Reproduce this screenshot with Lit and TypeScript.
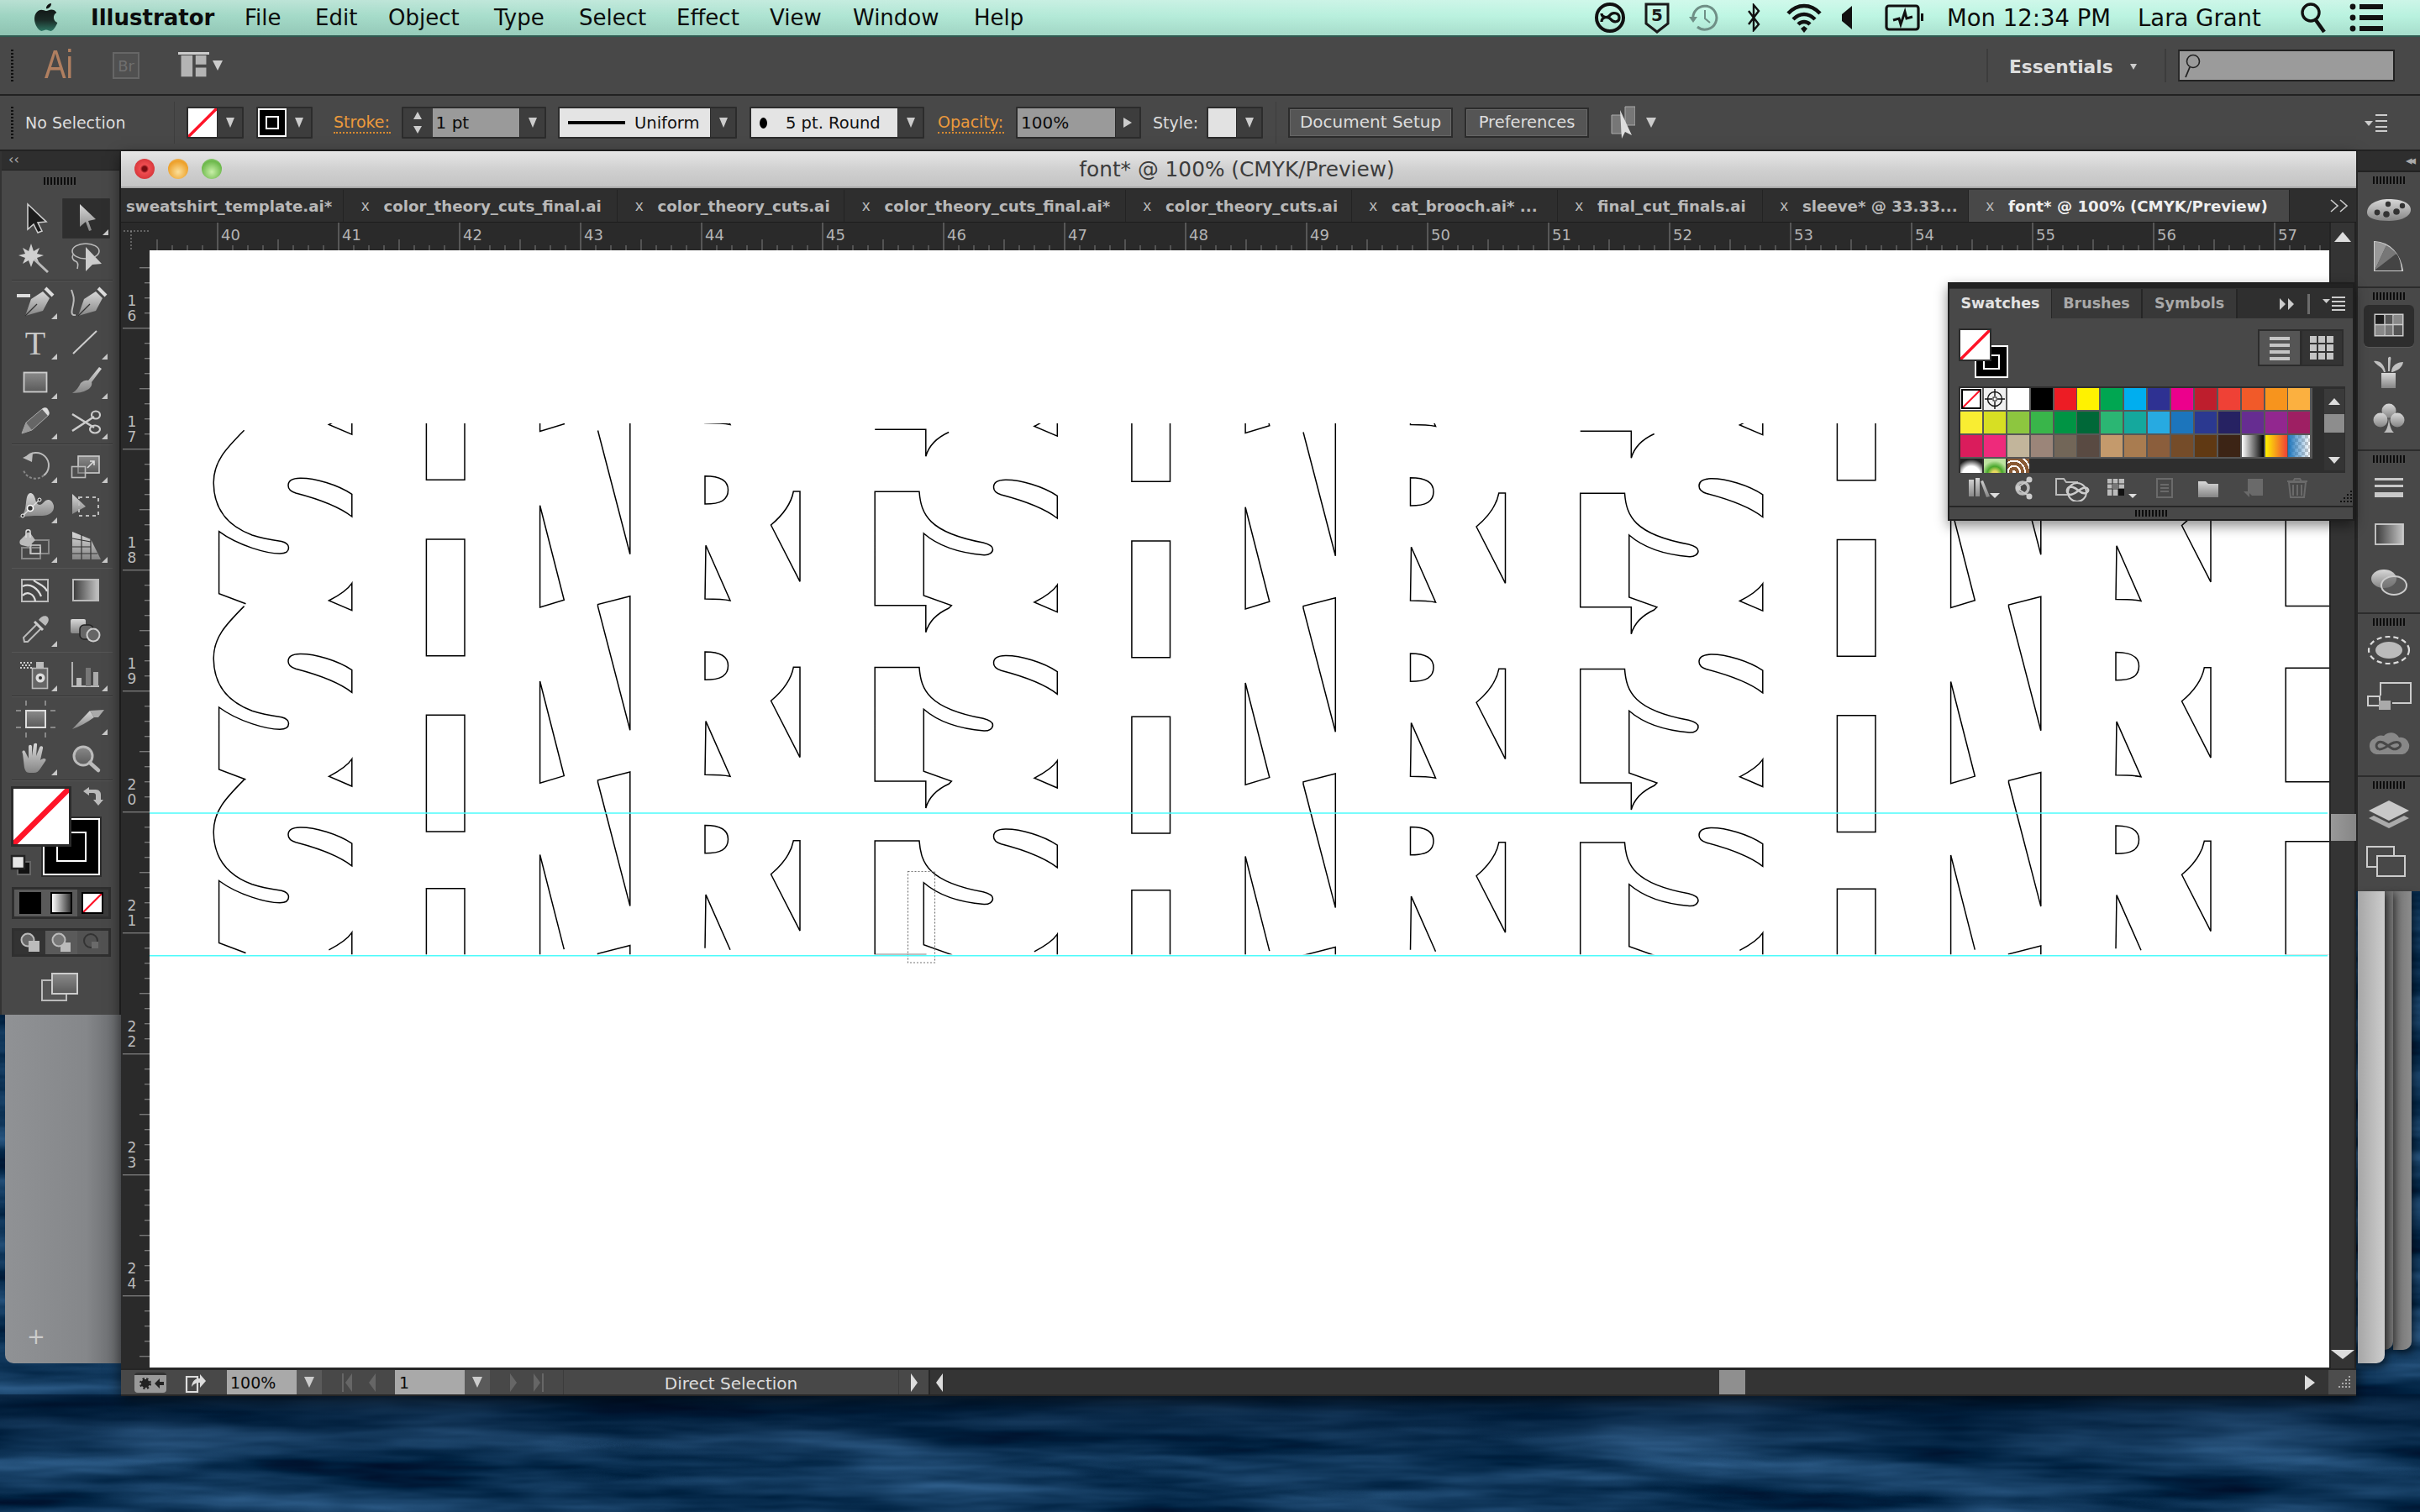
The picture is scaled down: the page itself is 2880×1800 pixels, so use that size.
import { LitElement, html, css, svg } from 'lit';
import { customElement } from 'lit/decorators.js';

const menuItems: [string, number][] = [
  ['File', 84], ['Edit', 87], ['Object', 126], ['Type', 101], ['Select', 116],
  ['Effect', 111], ['View', 99], ['Window', 144], ['Help', 70],
];

const tabs: { name: string; w: number; close?: boolean; active?: boolean }[] = [
  { name: 'sweatshirt_template.ai*', w: 264 },
  { name: 'color_theory_cuts_final.ai', w: 326, close: true },
  { name: 'color_theory_cuts.ai', w: 270, close: true },
  { name: 'color_theory_cuts_final.ai*', w: 334.5, close: true },
  { name: 'color_theory_cuts.ai', w: 269, close: true },
  { name: 'cat_brooch.ai* ...', w: 245, close: true },
  { name: 'final_cut_finals.ai', w: 244, close: true },
  { name: 'sleeve* @ 33.33...', w: 245, close: true },
  { name: 'font* @ 100% (CMYK/Preview)', w: 382, close: true, active: true },
];

const swatches = [
  ['none', 'reg', '#ffffff', '#000000', '#ed1c24', '#fff200', '#00a651', '#00aeef', '#2e3192', '#ec008c', '#be1e2d', '#ef4136', '#f15a29', '#f7941d', '#fbb040'],
  ['#f9ed32', '#d7df23', '#8dc63f', '#39b54a', '#009444', '#006838', '#2bb673', '#15a89d', '#27aae1', '#1c75bc', '#2b3990', '#262262', '#662d91', '#92278f', '#9e1f63'],
  ['#da1c5c', '#ee2a7b', '#c2b59b', '#9b8579', '#726658', '#594a42', '#c49a6c', '#a97c50', '#8b5e3c', '#754c29', '#603913', '#3c2415',
    'linear-gradient(90deg,#fff,#000)', 'linear-gradient(90deg,#fff200,#ef4136)',
    'linear-gradient(90deg,#1c75bc,rgba(28,117,188,0)),repeating-conic-gradient(#ccc 0 25%,#fff 0 50%) 0 0/8px 8px'],
];

const rowOffsets = [-209.5, 0, 209.3, 415.8];

// artwork paths use screen coordinates of the first column
const lobe = 'M418.8,588.3 C402,577 375,569 357,569.3 C347,569.5 343,573 343,578 C343,583 347,585.5 352,587 C375,593 402,602 418.8,615 Z';
const spur = 'M418.8,694.3 C413,703 403,709 391.4,715 L418.8,726.7 Z';
const spurOpen = 'M391.4,715 C403,709 413,703 418.8,694.3 V726.7';
const bar = 'M507.4,642 H553 V780.7 H507.4 Z';
const nLeft = 'M642.6,601.7 L671.3,714.3 L642.6,723 Z';
const nLeftOpen = 'M642.6,723 V601.7 L671.3,714.3';
const nRight = 'M749.8,709.7 L711.5,719.5 L711.5,722 L749.8,869.3 Z';
const nRightOpen = 'M711.5,722 L749.8,869.3 V709.7';
const bowl = 'M839,566.7 C858,566.7 866.5,572 866.5,583.3 C866.5,595 858,600 839,600 Z';
const rLeg = 'M840,649.3 L869,715 C860,713 850,713 839,713 Z';
const rLegOpen = 'M839,713 L840,649.3 L869,715';
const rRight = 'M944.3,585 H952 V692.3 L917.5,625 C933,612 942,597 944.3,585 Z';
const sBody = 'M290.6,512.3 C268,535 254,550 254.2,575 C254.4,603 268,625 300,637 C312,641 325,643 335,644.5 C341,646 343.5,648 343.5,652 C343.5,657 339,659 333,659 C318,659 284,650 260.6,632.7 L260.6,706.7 L292.5,718.7';
const sBlock = 'M1041.2,585.3 H1094 C1096,612 1105,634 1170,646 C1178,648 1181.5,650 1181.5,654 C1181.5,658 1177,661 1171,660.7 C1150,659 1120,653 1099.3,635 V709 L1132.4,720.7 L1129.2,724 C1116,730 1106,738 1101.8,752.7 V720.7 H1041.2 Z';
const sBlockTop = 'M1041.2,720.7 H1101.8 V752.7 C1106,738 1116,730 1129.2,724';

const corner = svg`<path d="M47 43l7-7v7z" fill="#c8c8c8"/>`;

const tools = [
  [svg`<path d="M19 6v30l7-6 5 10 5-2-5-10 10-1z" fill="#1c1c1c" stroke="#ccc" stroke-width="1.6"/>`,
   svg`<path d="M20 6v27l7-6 4 11 3-1-4-11 9-2z" fill="url(#mg)"/>${corner}`],
  [svg`<path d="M23 5l3 9 7-4-3 7 8 2-8 3 3 7-7-4-3 8-3-8-7 4 3-7-8-3 8-2-3-7 7 4z" fill="#d0d0d0"/><path d="M27 24l16 15" stroke="#bbb" stroke-width="3"/>`,
   svg`<ellipse cx="28" cy="14" rx="16" ry="9" fill="none" stroke="#bbb" stroke-width="1.6"/><path d="M13 18c-2 4 0 7 3 8 3 1 3 5 2 9" fill="none" stroke="#bbb" stroke-width="1.6"/><path d="M28 9l19 20-11 1-8 8z" fill="#ccc"/>`],
  [svg`<path d="M16 39l7-20 14-9 8 8-8 15z" fill="url(#mg)"/><path d="M40 6l9 9" stroke="#ddd" stroke-width="4"/><path d="M16 39l14-14" stroke="#333" stroke-width="1.2"/><path d="M6 13h16v4H6z" fill="#ddd"/>${corner}`,
   svg`<g transform="translate(3)"><path d="M16 39l7-20 14-9 8 8-8 15z" fill="url(#mg)"/><path d="M40 6l9 9" stroke="#ddd" stroke-width="4"/><path d="M16 39l14-14" stroke="#333" stroke-width="1.2"/></g><path d="M11 8c2 6 4 10 2 18-2 8-3 13 3 12" fill="none" stroke="#bbb" stroke-width="2"/>`],
  [svg`<text x="28" y="36.5" text-anchor="middle" font-family="Liberation Serif" font-size="40" fill="#c8c8c8">T</text>${corner}`,
   svg`<path d="M13 36l28-27" stroke="#ccc" stroke-width="2"/>${corner}`],
  [svg`<rect x="14.5" y="11.5" width="27" height="23" fill="url(#dg)" stroke="#ccc" stroke-width="1.8"/>${corner}`,
   svg`<path d="M47 7L35 23c1 3-1 7-5 9-5 3-12 4-18 4 5-3 8-8 10-12 3-3 7-4 9-3L44 5z" fill="url(#mg)"/>${corner}`],
  [svg`<path d="M12 36l5-13L36 7c3-2 6-2 7 1l1 2c1 2 0 4-1 5L24 32z" fill="#666" stroke="#aaa" stroke-width="1"/><path d="M36 7c3-2 6-2 7 1l1 2c1 2 0 4-1 5z" fill="#ddd"/><path d="M12 36l5-13 7 9z" fill="#999"/>${corner}`,
   svg`<path d="M12 13l26 16M12 33l26-17" stroke="#ccc" stroke-width="2.5"/><ellipse cx="40" cy="14" rx="5" ry="4.5" fill="none" stroke="#ccc" stroke-width="2.2"/><ellipse cx="39" cy="31" rx="6" ry="4.5" fill="none" stroke="#ccc" stroke-width="2.2"/>${corner}`],
  [svg`<path d="M17 13A15 15 0 1 1 38 34" fill="none" stroke="#bbb" stroke-width="2"/><path d="M38 34A15 15 0 0 1 14 28" fill="none" stroke="#888" stroke-width="2" stroke-dasharray="3 2"/><path d="M13 13l12-6-1 11z" fill="#bbb"/>${corner}`,
   svg`<rect x="19" y="11" width="25" height="20" fill="url(#dg)" stroke="#ccc" stroke-width="1.6"/><rect x="11.5" y="23.5" width="16" height="13" fill="#555" fill-opacity=".5" stroke="#bbb" stroke-width="1.6"/><path d="M30 25l8-8m-5 0h5v5" fill="none" stroke="#ddd" stroke-width="1.6"/>${corner}`],
  [svg`<path d="M8 36C18 32 16 20 18 12c2-8 8-6 10 2 1 6 5 10 10 4 4-5 10-4 12 4 1 8-6 12-14 12-8 0-16 0-28 2z" fill="url(#mg)"/><path d="M13 34l20-19" stroke="#ddd" stroke-width="1.4"/><circle cx="22" cy="25" r="3.5" fill="#333" stroke="#fff" stroke-width="1.6"/><circle cx="13" cy="34" r="2" fill="#333" stroke="#fff"/><circle cx="33" cy="15" r="2" fill="#333" stroke="#fff"/>${corner}`,
   svg`<path d="M12 8v24l16-9z" fill="url(#mg)"/><rect x="20" y="12" width="23" height="22" fill="none" stroke="#bbb" stroke-width="2" stroke-dasharray="4 4"/>`],
  [svg`<rect x="12" y="25" width="22" height="13" fill="none" stroke="#888" stroke-width="2"/><rect x="23" y="16" width="21" height="16" fill="none" stroke="#888" stroke-width="2"/><rect x="22" y="22" width="12" height="10" fill="none" stroke="#ccc" stroke-width="1.5"/><path d="M10 16l7-7c1-3 5-3 6 0l5 7-8 8-8-2c-3-1-3-4-2-6z" fill="#bbb"/><path d="M17 13V6c0-3 5-3 5 0v7" fill="none" stroke="#ddd" stroke-width="1.5"/>${corner}`,
   svg`<path d="M12 6l22 9 12 24H12z" fill="url(#mg)"/><path d="M12 14l22 4M12 24h22M12 32h30M23 9v30M34 15v24" stroke="#333" stroke-width="1.2"/>${corner}`],
  [svg`<rect x="12" y="10" width="31" height="26" fill="none" stroke="#bbb" stroke-width="2"/><path d="M13 18c9-4 18 2 22 12M13 29c5-6 14-2 15 7M26 11c5 4 14 6 16 13" fill="none" stroke="#ddd" stroke-width="2.2"/>`,
   svg`<rect x="13" y="10" width="30" height="25" fill="url(#hg)" stroke="#bbb" stroke-width="2"/>`],
  [svg`<path d="M15 37l-1-5 16-16 5 5-16 16z" fill="none" stroke="#bbb" stroke-width="2"/><path d="M27 13l10 10" stroke="#ccc" stroke-width="3"/><path d="M32 11c3-5 9-6 11-3s0 7-3 10z" fill="#bbb"/>${corner}`,
   svg`<rect x="10" y="10" width="18" height="17" rx="2" fill="url(#mg)"/><rect x="21" y="17" width="16" height="17" rx="5" fill="#666" stroke="#222" stroke-width="1.5"/><circle cx="37" cy="29" r="7.5" fill="#666" stroke="#ccc" stroke-width="2"/>`],
  [svg`<rect x="24.5" y="15.5" width="18" height="24" fill="#666" stroke="#bbb" stroke-width="1.6"/><circle cx="34" cy="27" r="5.5" fill="#ddd"/><circle cx="34" cy="27" r="2" fill="#333"/><rect x="29" y="8" width="9" height="7" fill="#bbb"/><path d="M10 9h2m2 0h2m2 0h2m2 0h2M12 12h2m2 0h2m2 0h2M10 15h2m2 0h2m2 0h2m2 0h2" stroke="#ccc" stroke-width="2"/>${corner}`,
   svg`<path d="M12 8v29h32" fill="none" stroke="#bbb" stroke-width="1.8"/><rect x="17" y="27" width="6" height="10" fill="#bbb"/><rect x="28" y="15" width="6" height="22" fill="#777"/><rect x="37" y="20" width="6" height="17" fill="#aaa"/>${corner}`],
  [svg`<rect x="17" y="14" width="23" height="20" fill="url(#dg)" stroke="#ddd" stroke-width="2"/><path d="M5 14h6M5 34h6M46 14h6M46 34h6M17 2v6M40 2v6M17 40v6M40 40v6" stroke="#888" stroke-width="2"/>`,
   svg`<path d="M12 36l21-22 5 8C30 28 20 33 12 36z" fill="url(#mg)"/><path d="M33 14l17-1-7 9h-5z" fill="#aaa"/>${corner}`],
  [svg`<path d="M13 17c-2-3 2-5 3-2l4 8 0-14c0-3 4-3 4 0v11l2-13c0-3 5-3 4 0l-1 13 4-10c1-3 5-2 4 1l-3 14c5-4 8-1 6 1l-6 9c-2 3-4 5-8 5h-5c-4 0-5-3-6-6z" fill="url(#mg)"/>${corner}`,
   svg`<circle cx="25" cy="20" r="11" fill="url(#dg)" stroke="#bbb" stroke-width="3"/><path d="M33 28l10 9" stroke="#bbb" stroke-width="4.5" stroke-linecap="round"/>`],
];
const toolGroups = [[0, 1], [2, 3, 4, 5], [6, 7, 8], [9, 10], [11], [12, 13]];

const noneSwatch = svg`<path d="M0 100L100 0" stroke="#ff1428" stroke-width="10"/>`;

const menuIcons: [number, unknown][] = [
  [56, html`<svg width="38" height="38" viewBox="0 0 38 38"><circle cx="19" cy="19" r="16" fill="none" stroke="#111" stroke-width="4"/><path d="M9 24c0-6 8-7 11-3s10 4 10-2-8-7-11-3-10 3-10-2" fill="none" stroke="#111" stroke-width="3.2"/></svg>`],
  [56, html`<svg width="32" height="38" viewBox="0 0 32 38"><path d="M3 3h26v23l-13 10L3 26z" fill="none" stroke="#1a1a1a" stroke-width="3"/><text x="16" y="23" text-anchor="middle" font-family="DejaVu Sans" font-weight="700" font-size="20" fill="#1a1a1a">5</text></svg>`],
  [56, html`<svg width="38" height="38" viewBox="0 0 38 38"><path d="M6 21a14 14 0 1 1 5 9" fill="none" stroke="#6f8f86" stroke-width="3"/><path d="M1 18h10l-5 7z" fill="#6f8f86"/><path d="M20 10v10l6 5" fill="none" stroke="#6f8f86" stroke-width="2"/></svg>`],
  [62, html`<svg width="18" height="34" viewBox="0 0 18 34"><path d="M3 9l12 16-6 7V2l6 7L3 25" fill="none" stroke="#111" stroke-width="2.4"/></svg>`],
  [58, html`<svg width="46" height="38" viewBox="0 0 46 38"><path d="M4 14c11-12 27-12 38 0M10 21c8-8 18-8 26 0M16 27c4-4 10-4 14 0" fill="none" stroke="#111" stroke-width="4.5"/><path d="M19 32l4-3 4 3-4 5z" fill="#111"/></svg>`],
  [44, html`<svg width="14" height="30" viewBox="0 0 14 30"><path d="M1 11l12-10v28L1 19z" fill="#111"/></svg>`],
  [92, html`<svg width="46" height="34" viewBox="0 0 46 34"><rect x="2" y="3" width="38" height="28" rx="3" fill="none" stroke="#111" stroke-width="3.2"/><path d="M10 20l7-2 2 7 5-15 2 8 7-2" fill="none" stroke="#111" stroke-width="3"/><path d="M43 12h3v9h-3z" fill="#111"/></svg>`],
];
const menuIcons2: [number, unknown][] = [
  [56, html`<svg width="32" height="38" viewBox="0 0 32 38"><circle cx="13" cy="13" r="10" fill="none" stroke="#111" stroke-width="3.4"/><path d="M19 22l10 14" stroke="#111" stroke-width="4.5"/></svg>`],
  [72, html`<svg width="42" height="36" viewBox="0 0 42 36"><circle cx="4" cy="5" r="3.4" fill="#111"/><circle cx="4" cy="18" r="3.4" fill="#111"/><circle cx="4" cy="31" r="3.4" fill="#111"/><path d="M12 2h28v6H12zM12 15h28v6H12zM12 28h28v6H12z" fill="#111"/></svg>`],
];

const dockGroups: { icon: unknown; active?: boolean }[][] = [
  [
    { icon: svg`<g transform="translate(0 5)"><path d="M30 4C16 4 4 10 4 20c0 7 10 10 26 10s26-6 26-13C56 8 44 4 30 4z" fill="url(#mg)"/><circle cx="16" cy="20" r="3.4" fill="#333"/><circle cx="27" cy="22" r="3.8" fill="#333"/><circle cx="39" cy="19" r="3.8" fill="#333"/><circle cx="46" cy="12" r="3.2" fill="#333"/><circle cx="29" cy="10" r="3.2" fill="#333"/></g>` },
    { icon: svg`<path d="M13 38V4c18 1 30 14 33 34z" fill="none" stroke="#ccc" stroke-width="2"/><path d="M13 38V4c6 0 10 2 14 4z" fill="#999"/><path d="M13 38l14-30c5 3 9 6 12 10z" fill="#777"/><path d="M13 38l26-20c3 4 5 9 6 20z" fill="#444"/>` },
  ],
  [
    { active: true, icon: svg`<rect x="13.5" y="8.5" width="33" height="25" fill="none" stroke="#ccc" stroke-width="2"/><path d="M14 9h10v11H14z" fill="#1c1c1c"/><path d="M25 9h10v11H25z" fill="#555"/><path d="M36 9h10v11H36z" fill="#888"/><path d="M14 21h10v12H14z" fill="#888"/><path d="M25 21h10v12H25z" fill="#777"/><path d="M36 21h10v12H36z" fill="#555"/><path d="M25 9v24M35 9v24M14 20.5h32" stroke="#ccc" stroke-width="1.4"/>` },
    { icon: svg`<rect x="21" y="22" width="17" height="18" fill="url(#mg)"/><path d="M24 21C22 14 16 14 12 8c6-1 12 2 14 13zM29 20V4c3-3 4 0 3 3l-1 13zM33 21c0-8 7-12 14-12-1 7-7 10-13 12z" fill="#c0c0c0"/>` },
    { icon: svg`<circle cx="30" cy="11" r="8.5" fill="url(#mg)"/><circle cx="20" cy="22" r="8.5" fill="url(#mg)"/><circle cx="40" cy="22" r="8.5" fill="url(#mg)"/><path d="M30 16c0 10-2 18-6 21h12c-4-3-6-11-6-21z" fill="#bbb"/>` },
  ],
  [
    { icon: svg`<path d="M13 9h34v3H13zM13 17h34v3H13zM13 26h34v6H13z" fill="#c8c8c8"/>` },
    { icon: svg`<rect x="14" y="8" width="33" height="24" fill="url(#hg)" stroke="#ccc" stroke-width="1.8"/>` },
    { icon: svg`<ellipse cx="24" cy="17" rx="15" ry="11" fill="url(#mg)"/><ellipse cx="36" cy="25" rx="15" ry="11" fill="#666" fill-opacity=".55" stroke="#ccc" stroke-width="2"/>` },
  ],
  [
    { icon: svg`<ellipse cx="30" cy="20" rx="16" ry="10" fill="#bbb"/><ellipse cx="30" cy="20" rx="24" ry="16" fill="none" stroke="#ddd" stroke-width="2.2" stroke-dasharray="6 4"/>` },
    { icon: svg`<path d="M20 18V3h36v24H34" fill="none" stroke="#ccc" stroke-width="2"/><rect x="5" y="19" width="14" height="11" fill="none" stroke="#ccc" stroke-width="2"/><rect x="18" y="24" width="14" height="11" fill="#aaa"/>` },
    { icon: svg`<path d="M24 10a11 11 0 0 1 18 2 10 10 0 0 1 4 20H15a10 10 0 0 1-2-19 11 11 0 0 1 11-3z" fill="#888"/><path d="M18 26c-6-3-2-11 5-8s10 10 17 7 3-9-4-7-10 8-18 8" fill="none" stroke="#484848" stroke-width="3"/>` },
  ],
  [
    { icon: svg`<path d="M30 5l24 12-24 12L6 17z" fill="#c8c8c8"/><path d="M12 23l18 9 18-9 6 3-24 12L6 26z" fill="#aaa"/>` },
    { icon: svg`<rect x="4" y="4" width="32" height="24" fill="#484848" stroke="#ccc" stroke-width="2"/><rect x="16" y="15" width="33" height="24" fill="#484848" stroke="#ccc" stroke-width="2"/>` },
  ],
];

const panelIcons = [
  svg`<path d="M3 4h6v20H3zM11 2h5v22h-5zM17 6l3-1 8 19-4 1z" fill="url(#mg)"/><path d="M28 20h12l-6 6z" fill="#ddd"/>`,
  svg`<circle cx="14" cy="14" r="7" fill="none" stroke="#bbb" stroke-width="3.5"/><circle cx="22" cy="4" r="3.5" fill="#ccc"/><circle cx="22" cy="24" r="3.5" fill="#ccc"/><circle cx="9" cy="14" r="3" fill="#ccc"/><path d="M10 12l11-7M10 16l11 7" stroke="#ccc" stroke-width="1.6"/>`,
  svg`<path d="M20 22H2V3h9l3 4h14" fill="none" stroke="#bbb" stroke-width="2"/><path d="M18 22c-6-3-3-11 4-9s9 9 15 7 3-8-3-6-9 8-16 8" fill="none" stroke="#ccc" stroke-width="2.5"/><circle cx="27" cy="19" r="11" fill="none" stroke="#ccc" stroke-width="2"/>`,
  svg`<rect x="2" y="3" width="20" height="20" fill="#bbb"/><path d="M2 9h20M2 15h20M8 3v20M15 3v20" stroke="#333" stroke-width="1.2"/><path d="M8 9h7v6H8z" fill="#777"/><path d="M15 15h7v8h-7z" fill="#111"/><path d="M27 21h10l-5 5z" fill="#ddd"/>`,
  svg`<rect x="6" y="3" width="18" height="22" fill="none" stroke="#6a6a6a" stroke-width="2"/><path d="M10 10h10M10 14h10M10 18h10" stroke="#6a6a6a" stroke-width="2"/>`,
  svg`<path d="M2 6h9l3 3h12v16H2z" fill="url(#mg)"/>`,
  svg`<path d="M8 3h18v20H13l-5-5z" fill="#6a6a6a"/><path d="M3 18h7v7z" fill="#6a6a6a"/>`,
  svg`<path d="M5 7h20l-2 18H7zM3 6h24M10 6l2-3h6l2 3M10 10v13M15 10v13M20 10v13" fill="none" stroke="#6a6a6a" stroke-width="2"/>`,
];

@customElement('app-root')
export class AppRoot extends LitElement {
  static styles = css`
    :host { display: block; width: 2880px; height: 1800px; overflow: hidden; }
    * { box-sizing: border-box; }
    .desktop { position: relative; width: 2880px; height: 1800px; font-family: "DejaVu Sans", sans-serif; color: #ddd; display: flex; flex-direction: column; }
    .wallpaper { position: absolute; left: 0; top: 0; width: 2880px; height: 1800px; }
    .defs { position: absolute; width: 0; height: 0; }

    .menubar { position: relative; height: 44px; flex: none; display: flex; align-items: center; color: #0c0c0c; font-size: 26px; padding-left: 40px;
      border-bottom: 2px solid #2f5a50;
      background: linear-gradient(180deg, rgba(255,255,255,.28), rgba(255,255,255,0) 45%, rgba(0,40,30,.1)), linear-gradient(90deg, #9ed4c2, #b2e8d6 40%, #bff7e4 70%, #b9f2df); }
    .apple { width: 30px; height: 36px; margin-right: 38px; }
    .menu-app { width: 183px; font-weight: 700; }
    .menu-right { display: flex; align-items: center; margin-left: auto; padding-right: 27px; font-size: 27.5px; }
    .mi { display: flex; justify-content: center; align-items: center; }
    .clock { width: 227px; white-space: nowrap; margin-left: 5px; }
    .user { width: 181px; font-weight: 400; white-space: nowrap; }

    .appbar { position: relative; height: 70px; flex: none; display: flex; align-items: center; padding-left: 13px; background: #484848; border-bottom: 2px solid #222; }
    .grip-v { width: 3px; height: 38px; background: repeating-linear-gradient(180deg, #111 0 2px, transparent 2px 4px); }
    .ai { width: 34px; margin-left: 37px; margin-top: -4px; font: 48px "Liberation Sans", sans-serif; color: #b07f60; transform: scaleX(.8); transform-origin: left; }
    .br { width: 32px; height: 32px; margin-left: 47px; border: 2px solid #666; color: #6f6f6f; font-size: 18px; display: flex; align-items: center; justify-content: center; background: #505050; }
    .arr { width: 0; height: 0; border-left: 6px solid transparent; border-right: 6px solid transparent; border-top: 12px solid #ccc; }
    .layout { width: 37px; height: 32px; margin-left: 46px; border-top: 3px solid #ccc; }
    .app-arr { margin-left: 4px; }
    .workspace-switch { margin-left: auto; display: flex; align-items: center; height: 40px; border-left: 2px solid #3c3c3c; padding-left: 25px; padding-top: 2px; font-size: 21.7px; font-weight: 700; width: 212px; }
    .workspace-switch .arr { border-left-width: 4px; border-right-width: 4px; border-top-width: 7px; margin-left: 20px; }
    .search { width: 258px; height: 38px; margin-left: 14px; margin-right: 30px; background: #9b9b9b; border: 2px solid #222; border-left-color: #2a2a2a; padding-left: 4px; display: flex; align-items: center; position: relative; }
    .search-sep { width: 2px; height: 40px; background: #3c3c3c; }

    .ctrl { position: relative; height: 66px; flex: none; display: flex; align-items: center; padding-left: 13px; background: #484848; border-bottom: 2px solid #222; font-size: 19px; white-space: nowrap; }
    .none-label { margin-left: 14px; width: 177px; color: #ddd; }
    .sep { width: 1px; height: 50px; background: #3d3d3d; }
    .field { height: 38px; display: flex; background: #2c2c2c; padding: 2px; border-radius: 1px; flex: none; }
    .chip { width: 34px; height: 34px; background: #fff; display: block; }
    .stroke-chip { background: #000; border: 2px solid #fff; padding: 7px; }
    .stroke-chip i { display: block; width: 100%; height: 100%; border: 2px solid #fff; }
    .dd { width: 30px; background: #3d3d3d; display: flex; align-items: center; justify-content: center; border-left: 1px solid #2c2c2c; }
    .dd .arr { border-left-width: 5px; border-right-width: 5px; border-top-width: 12px; }
    .fill-w { margin-left: 14px; width: 68px; }
    .stroke-w { margin-left: 15px; width: 67px; }
    .orange { color: #ec9a3c; border-bottom: 2px dotted #d98a30; line-height: 24px; }
    .stroke-l { margin-left: 25px; width: 68px; }
    .spin { width: 35px; display: flex; flex-direction: column; background: #3d3d3d; align-items: center; justify-content: space-around; }
    .spin b { display: block; width: 0; height: 0; border-left: 5px solid transparent; border-right: 5px solid transparent; }
    .spin .up { border-bottom: 9px solid #ccc; }
    .spin .down { border-top: 9px solid #ccc; }
    .val { background: #9a9a9a; color: #0c0c0c; padding-left: 4px; line-height: 34px; font-size: 20px; }
    .stroke-f { margin-left: 13px; width: 172px; }
    .stroke-f .val { width: 105px; }
    .sel { background: #e4e4e4; color: #111; display: flex; align-items: center; font-size: 19.5px; }
    .uni { margin-left: 14px; width: 213px; }
    .uni .sel { width: 181px; padding-left: 10px; }
    .uni .sel i { display: block; width: 68px; height: 4px; background: #000; margin-right: 11px; }
    .prof { margin-left: 15px; width: 208px; }
    .prof .sel { width: 176px; padding-left: 10px; }
    .prof .sel i { display: block; width: 9px; height: 13px; background: #000; border-radius: 50%; margin-right: 22px; }
    .opacity-l { margin-left: 16px; width: 79px; }
    .op-f { margin-left: 14px; width: 149px; }
    .op-f .val { width: 119px; }
    .op-f .dd .arr { border-top: 6px solid transparent; border-bottom: 6px solid transparent; border-left: 10px solid #ccc; border-right: 0; }
    .style-l { margin-left: 14px; width: 51px; }
    .style-f { margin-left: 13px; width: 67px; }
    .style-f .chip { background: #e2e2e2; }
    .sep2 { margin-left: 15px; }
    .btn { height: 36px; margin-left: 14px; background: #555; border: 2px solid #2c2c2c; outline: 1px solid #666; outline-offset: -3px; color: #ddd; font-size: 20px; text-align: center; line-height: 31px; }
    .btn-doc { width: 196px; }
    .btn-pref { width: 148px; font-size: 19.5px; }
    .arrange { margin-left: 25px; width: 30px; height: 42px; }
    .arrange-arr { margin-left: 13px; }
    .ctrl-menu { margin-left: auto; margin-right: 34px; width: 32px; height: 24px; }

    .workspace { flex: 1; display: flex; position: relative; min-height: 0; }
    .leftcol { width: 144px; flex: none; display: flex; flex-direction: column; height: 1443px; }
    .toolbar { height: 1028px; flex: none; background: #484848; border-right: 2px solid #262626; border-left: 2px solid #333; }
    .strip { height: 23px; background: #2e2e2e; color: #aaa; font-size: 16px; line-height: 20px; padding-left: 8px; border-bottom: 1px solid #222; }
    .grip { width: 38px; height: 9px; background: repeating-linear-gradient(90deg, #0d0d0d 0 2px, transparent 2px 4px); }
    .toolbar .grip { margin: 8px 0 0 50px; }
    .tools { padding: 16.25px 0 0 10px; }
    .tool-row { display: flex; height: 47.5px; }
    .tool { width: 60px; display: flex; align-items: center; justify-content: center; }
    .tool svg { width: 56px; height: 46px; }
    .tool.on { background: #2e2e2e; box-shadow: inset 0 0 0 1px #333; border-radius: 2px; width: 57px; margin-left: 2px; }
    .tool-sep { height: 1.5px; margin: 1.75px 8px 1.75px 2px; background: #363636; border-bottom: 1px solid #555; }
    .well { position: relative; height: 115px; margin-top: 6px; }
    .well-fill { position: absolute; left: 11px; top: 0; width: 72px; height: 72px; background: #fff; border: 3px solid #2c2c2c; z-index: 1; }
    .well-fill svg, .chip svg { display: block; width: 100%; height: 100%; }
    .well-stroke { position: absolute; left: 47px; top: 36px; width: 72px; height: 72px; background: #000; border: 2px solid #2c2c2c; outline: 2px solid #fff; outline-offset: -4px; display: flex; align-items: center; justify-content: center; }
    .well-stroke i { display: block; width: 36px; height: 36px; border: 2px solid #fff; }
    .swap { position: absolute; left: 96px; top: 0; width: 26px; height: 26px; }
    .defaults { position: absolute; left: 10px; top: 81px; width: 26px; height: 26px; }
    .mode { margin: 5px 0 0 12px; width: 118px; height: 38px; background: #2f2f2f; display: flex; padding: 3px; }
    .mode div { flex: 1; display: flex; align-items: center; justify-content: center; background: #5a5a5a; }
    .mode .last { background: #3a3a3a; }
    .mode i { display: block; width: 26px; height: 26px; border: 2px solid #000; }
    .m-color { background: #000; }
    .m-grad { background: linear-gradient(90deg, #fff, #333); }
    .m-none { background: #fff; }
    .draw { margin: 11px 0 0 12px; width: 118px; height: 34px; background: #2f2f2f; display: flex; padding: 3px; }
    .draw div { flex: 1; background: #5a5a5a; display: flex; justify-content: center; align-items: center; }
    .draw .cur { background: #333; }
    .draw .off { background: #525252; }
    .screen { margin: 19px 0 0 47px; width: 44px; height: 34px; display: block; }
    .card { flex: 1; margin-left: 6px; border-radius: 0 0 0 10px; background: linear-gradient(90deg, #909295, #85878a 70%, #66686b); color: #ccc; font-size: 26px; display: flex; align-items: flex-end; padding: 0 0 17px 26px; }
    .card span { line-height: 30px; }

    .doc { width: 2660px; flex: none; display: flex; flex-direction: column; height: 1482px; box-shadow: 0 6px 16px rgba(0,0,0,.6); }
    .title { height: 42px; flex: none; display: flex; align-items: center; position: relative; padding-left: 16px; gap: 16px; background: linear-gradient(180deg, #e6e6e6, #cfcfcf 55%, #c4c4c4); color: #3c3c3c; font-size: 24.8px; }
    .title-text { position: absolute; left: 0; right: 4px; top: 7px; text-align: center; }
    .light { width: 24px; height: 24px; border-radius: 50%; }
    .red { background: radial-gradient(circle at 50% 50%, #7a0c10 0 16%, #f04d50 30%, #d8383c 70%, #f6b9b9); }
    .amber { background: radial-gradient(circle at 50% 65%, #fbe09b, #eda02a 65%, #e9c585); }
    .green { background: radial-gradient(circle at 50% 65%, #c9f0a8, #6cb84b 65%, #b2dba0); }
    .title-gap { height: 4px; flex: none; background: linear-gradient(#a9a9a9 50%, #2c2c2c 50%); }
    .tabs { height: 39px; flex: none; display: flex; background: #2e2e2e; border-bottom: 1px solid #1d1d1d; color: #b8b8b8; font-size: 18.2px; font-weight: 700; white-space: nowrap; padding-left: 1px; position: relative; line-height: 41px; }
    .tab { display: flex; align-items: center; border-right: 1px solid #232323; padding-left: 5px; overflow: hidden; flex: none; }
    .tab.on { background: #484848; color: #eee; }
    .tab .x { font: 400 19px "Liberation Sans", sans-serif; color: #bbb; margin: 0 17px 0 16px; }
    .tab-more { margin-left: 47px; align-self: center; width: 24px; height: 16px; }
    .doc-mid { flex: 1; display: flex; min-height: 0; background: #2a2a2a; }
    .rulers { flex: 1; display: flex; flex-direction: column; min-width: 0; }
    .hr-row { height: 33px; flex: none; display: flex; }
    .corner { width: 34px; height: 33px; display: block; }
    .hr { display: block; }
    .vr-row { flex: 1; display: flex; min-height: 0; }
    .vr { width: 32px; height: 1330px; display: block; flex: none; margin-left: 2px; }
    .canvas { width: 2594px; height: 1330px; background: #fff; display: block; flex: none; }
    .vscroll { width: 32px; flex: none; background: #343434; border-left: 2px solid #232323; border-right: 2px solid #232323; display: flex; flex-direction: column; align-items: center; position: relative; }
    .vscroll .up { margin-top: 11px; border-left: 10px solid transparent; border-right: 10px solid transparent; border-bottom: 12px solid #ddd; }
    .vscroll .thumb { position: absolute; left: 0; right: -2px; top: 704px; height: 32px; background: linear-gradient(90deg, #999, #868686); }
    .vscroll .down { margin-top: auto; margin-bottom: 11px; border-left: 14px solid transparent; border-right: 14px solid transparent; border-top: 11px solid #ddd; }
    .status { height: 33px; flex: none; display: flex; align-items: center; background: #484848; border-top: 2px solid #262626; border-bottom: 2px solid #262626; font-size: 20px; padding-left: 16px; }
    .st-gear { width: 38px; height: 24px; border-radius: 4px; background: linear-gradient(#333 14%, #9a9a9a 14%); }
    .st-share { width: 26px; height: 26px; margin-left: 22px; }
    .st-zoom { width: 83px; height: 29px; margin-left: 24px; background: #a9a9a9; color: #0c0c0c; padding-left: 4px; line-height: 30px; font-size: 19px; }
    .st-dd { width: 30px; height: 29px; display: flex; align-items: center; justify-content: center; background: #5a5a5a; }
    .st-dd .arr { border-left-width: 6px; border-right-width: 6px; border-top-width: 13px; }
    .st-nav { width: 87px; height: 29px; display: flex; align-items: center; justify-content: center; gap: 20px; }
    .st-page { width: 83px; height: 29px; background: #a9a9a9; color: #0c0c0c; padding-left: 5px; line-height: 30px; font-size: 19px; }
    .tri-l, .tri-r { width: 0; height: 0; border-top: 11px solid transparent; border-bottom: 11px solid transparent; }
    .tri-l { border-right: 8px solid #666; }
    .tri-r { border-left: 8px solid #666; }
    .bar-l { border-left: 2px solid #666; padding-left: 2px; display: block; height: 22px; width: 12px; }
    .bar-l b { display: block; }
    .bar-r { border-right: 2px solid #666; padding-right: 2px; display: block; height: 22px; width: 12px; }
    .bar-r b { display: block; }
    .bright.tri-l { border-right-color: #ddd; }
    .bright.tri-r { border-left-color: #ddd; }
    .st-label { width: 400px; text-align: center; height: 29px; line-height: 32px; border-left: 1px solid #3c3c3c; border-right: 1px solid #3c3c3c; color: #ddd; }
    .st-next { width: 37px; height: 29px; display: flex; align-items: center; justify-content: center; border-right: 2px solid #262626; }
    .hscroll { flex: 1; height: 29px; background: #343434; display: flex; align-items: center; padding: 0 16px 0 7px; position: relative; }
    .hscroll .big { border-top-width: 9px; border-bottom-width: 9px; border-left-width: 12px; border-right-width: 12px; }
    .hscroll .thumb { position: absolute; left: 939px; top: 0; width: 31px; height: 29px; background: #8f8f8f; }
    .hscroll .next { margin-left: auto; }
    .resize { width: 33px; height: 29px; background: #4d4d4d; display: flex; align-items: center; justify-content: center; }

    .rightcol { width: 76px; flex: none; display: flex; flex-direction: column; }
    .dock { height: 881px; flex: none; background: #484848; border-left: 2px solid #262626; overflow: hidden; }
    .dock-strip { height: 25px; background: #2e2e2e; color: #aaa; font-size: 15px; text-align: right; padding-right: 8px; line-height: 22px; letter-spacing: -3px; border-bottom: 2px solid #222; }
    .dock-group { display: flex; flex-direction: column; align-items: center; padding: 5px 0 7px; border-bottom: 2px solid #2c2c2c; }
    .dock-group .grip { flex: none; margin-bottom: 3px; }
    .dock-item { width: 60px; height: 56px; flex: none; display: flex; align-items: center; justify-content: center; }
    .dock-item svg { width: 60px; height: 44px; }
    .dock-item.on { background: #2d2d2d; border-radius: 6px; box-shadow: 0 1px 0 #5a5a5a; height: 50px; margin: 3px 0; }
    .pages { display: flex; align-items: flex-start; height: 562px; padding-left: 2px; }
    .page { border-radius: 0 0 10px 0; box-shadow: 3px 4px 8px rgba(0,0,0,.5); }
    .page-a { width: 32px; height: 562px; background: linear-gradient(90deg, #a6a6a6, #cdcdcd); position: relative; z-index: 2; }
    .page-b { width: 10px; height: 546px; background: linear-gradient(90deg, #5e5e5e, #747474); position: relative; z-index: 1; }
    .page-c { width: 22px; height: 546px; background: linear-gradient(90deg, #717171, #8c8c8c); }

    .panel { position: absolute; left: 2318px; top: 336px; width: 484px; height: 284px; background: #484848; border: 2px solid #1f1f1f; box-shadow: 0 6px 14px rgba(0,0,0,.45); display: flex; flex-direction: column; z-index: 5; }
    .p-tabs { height: 41px; flex: none; display: flex; align-items: flex-end; background: #2f2f2f; border-top: 5px solid #222; font-size: 17.5px; font-weight: 700; color: #a9a9a9; position: relative; }
    .p-tab { height: 35px; line-height: 34px; text-align: center; border-right: 2px solid #262626; background: #383838; }
    .p-tab.on { background: #484848; color: #e2e2e2; border-right: 1px solid #262626; }
    .p-t1 { width: 122px; }
    .p-t2 { width: 108px; }
    .p-t3 { width: 113px; }
    .p-more { margin-left: auto; height: 35px; display: flex; align-items: center; gap: 14px; padding-right: 6px; }
    .p-body { flex: 1; position: relative; padding: 12px 0 0 11px; min-height: 0; }
    .p-top { display: flex; height: 65px; }
    .p-wells { position: relative; width: 70px; height: 60px; }
    .p-fill { position: absolute; left: 0; top: 0; width: 39px; height: 39px; background: #fff; border: 2px solid #2c2c2c; z-index: 1; }
    .p-stroke { position: absolute; left: 19px; top: 20px; width: 40px; height: 39px; background: #000; border: 2px solid #fff; display: flex; align-items: center; justify-content: center; }
    .p-stroke i { display: block; width: 20px; height: 18px; border: 2px solid #fff; }
    .views { margin-left: auto; margin-right: 11px; margin-top: 1px; display: flex; height: 44px; width: 102px; background: #2c2c2c; padding: 2px; gap: 3px; }
    .views div { flex: 1; display: flex; align-items: center; justify-content: center; }
    .v-list { background: #555; }
    .v-grid { background: #343434; }
    .grid-wrap { display: flex; height: 103px; width: 460px; margin-top: 4px; background: #2e2e2e; overflow: hidden; position: relative; }
    .p-swatches { width: 434px; flex: none; padding: 2px 0 0 2px; }
    .sw-row { display: flex; gap: 1.9px; height: 28px; background: #575757; width: 419px; padding-bottom: 2px; }
    .sw-row.last { background: transparent; height: 20px; padding: 0; }
    .sw { width: 26px; height: 26px; flex: none; display: block; }
    .sw svg { display: block; width: 100%; height: 100%; }
    .sw-none { background: #fff; border: 3px solid #000; outline: 1px solid #fff; outline-offset: -1px; }
    .sw-reg { background: #f0f0f0; }
    .sw-a { background: radial-gradient(circle at 50% 75%, #fff 0 45%, #222 80%); }
    .sw-b { background: radial-gradient(circle at 50% 70%, #e8d860 0 15%, #4aa82c 40%, #bde3a0 70%), #fff; }
    .sw-c { background: repeating-radial-gradient(circle at 30% 60%, #fff 0 2px, #8a5a34 2px 6px); }
    .p-scroll { width: 24px; margin-left: 1px; flex: none; display: flex; flex-direction: column; align-items: center; height: 97px; margin-top: 3px; background: #343434; }
    .p-scroll .box { width: 100%; height: 30px; display: flex; align-items: center; justify-content: center; background: #3a3a3a; }
    .p-scroll .t-up { border-left: 7px solid transparent; border-right: 7px solid transparent; border-bottom: 8px solid #ddd; }
    .p-scroll .t-down { border-left: 7px solid transparent; border-right: 7px solid transparent; border-top: 8px solid #ddd; margin-top: auto; margin-bottom: 8px; }
    .p-scroll .thumb { width: 100%; height: 22px; background: #8d8d8d; }
    .p-icons { display: flex; align-items: center; height: 38px; padding-left: 9px; }
    .p-icons svg { width: 44px; height: 30px; flex: none; }
    .i1 { margin-left: 9px; }
    .i2 { margin-left: 8px; }
    .i3 { margin-left: 17px; }
    .i4 { margin-left: 11px; }
    .i5 { margin-left: 9px; }
    .i6 { margin-left: 9px; }
    .i7 { margin-left: 8px; }
    .p-resize { position: absolute; right: 1px; bottom: 1px; width: 18px; height: 18px; }
    .p-foot { height: 16px; flex: none; background: #484848; border-top: 2px solid #262626; display: flex; align-items: center; justify-content: center; }
    .p-foot .grip { height: 8px; }
  `;

  renderCanvas() {
    const smallDy = [0, 2, 0.5];
    const blockDy = [0, 0, 2, 0.7];
    const parts: unknown[] = [];
    for (let c = 0; c < 4; c++) {
      const dx = c * 839.5;
      rowOffsets.forEach((off, r) => {
        // the shapes were cut at the band edges, so top and bottom rows stay open
        const first = r === 0;
        const last = r === rowOffsets.length - 1;
        if (c > 0) {
          parts.push(svg`<path transform="translate(${dx - 839.5} ${off + blockDy[c]})" d=${first ? sBlockTop : sBlock}/>`);
        } else if (r > 0) {
          parts.push(svg`<path transform="translate(0 ${off})" d=${sBody}/>`);
        }
        if (c === 3) return;
        const shapes = [lobe, last ? spurOpen : spur, bar, last ? nLeftOpen : nLeft, first ? nRightOpen : nRight, bowl, last ? rLegOpen : rLeg, rRight];
        for (const d of shapes) {
          parts.push(svg`<path transform="translate(${dx} ${off + smallDy[c]})" d=${d}/>`);
        }
      });
    }
    return html`<svg class="canvas" viewBox="178 298 2594 1330">
      <defs><clipPath id="art"><rect x="178" y="504" width="2594" height="632.2"/></clipPath></defs>
      <g clip-path="url(#art)" fill="none" stroke="#000" stroke-width="1.5">${parts}</g>
      <rect x="1080.5" y="1037.5" width="32" height="108.5" fill="none" stroke="#777" stroke-width="1.2" stroke-dasharray="2 2"/>
      <path d="M178 968H2770M178 1137.7H2770" stroke="#4dfbfb" stroke-width="1.5"/>
    </svg>`;
  }

  renderHRuler() {
    const ticks: unknown[] = [];
    const left = 178;
    for (let k = 0; k < 146; k++) {
      const x = 259 + 18 * (k - 4) - left;
      const major = (k - 4) % 8 === 0;
      const half = (k - 4) % 4 === 0;
      const h = major ? 33 : half ? 13 : 6;
      ticks.push(svg`<path d="M${x} ${33 - h}V33" stroke=${major ? '#777' : '#707070'} stroke-width="1.2"/>`);
    }
    const labels: unknown[] = [];
    for (let i = 0; i < 18; i++) {
      labels.push(svg`<text x=${259 + 144 * i - left + 4} y="21" font-size="18" fill="#b4b4b4" font-family="DejaVu Sans">${40 + i}</text>`);
    }
    return html`<svg class="hr" width="2594" height="33">${ticks}${labels}</svg>`;
  }

  renderVRuler() {
    const parts: unknown[] = [];
    for (let k = 0; k < 76; k++) {
      const y = 390.7 + 18 * (k - 4) - 298;
      const major = (k - 4) % 8 === 0;
      const half = (k - 4) % 4 === 0;
      const w = major ? 32 : half ? 12 : 6;
      parts.push(svg`<path d="M${32 - w} ${y}H32" stroke="#777" stroke-width="1.4"/>`);
    }
    for (let i = 0; i < 9; i++) {
      const y = 390.7 + 144 * i - 298;
      const digits = String(16 + i);
      parts.push(svg`<text x="11" y=${y - 27} text-anchor="middle" font-size="17" fill="#bbb" font-family="DejaVu Sans">${digits[0]}</text>
        <text x="11" y=${y - 9} text-anchor="middle" font-size="17" fill="#bbb" font-family="DejaVu Sans">${digits[1]}</text>`);
    }
    return html`<svg class="vr">${parts}</svg>`;
  }

  renderTools() {
    return html`<div class="tools">
      ${toolGroups.map((g) => html`${g.map((row) => html`<div class="tool-row">
        <div class="tool"><svg viewBox="0 0 56 46">${tools[row][0]}</svg></div>
        <div class=${row === 0 ? 'tool on' : 'tool'}><svg viewBox="0 0 56 46">${tools[row][1]}</svg></div>
      </div>`)}<div class="tool-sep"></div>`)}
    </div>`;
  }

  renderWell() {
    return html`<div class="well">
      <div class="well-fill"><svg viewBox="0 0 100 100" preserveAspectRatio="none">${noneSwatch}</svg></div>
      <div class="well-stroke"><i></i></div>
      <svg class="swap" viewBox="0 0 26 26"><path d="M1 6l7-5v3h8c4 0 6 3 6 6v6h3l-6 7-6-7h3v-5c0-2-1-3-3-3H8v3z" fill="#bbb"/></svg>
      <svg class="defaults" viewBox="0 0 26 26"><rect x="9" y="9" width="15" height="15" fill="#111" stroke="#666" stroke-width="2"/><rect x="2" y="2" width="15" height="15" fill="#e6e6e6" stroke="#222" stroke-width="2.5"/></svg>
    </div>
    <div class="mode">
      <div><i class="m-color"></i></div>
      <div><i class="m-grad"></i></div>
      <div class="last"><i class="m-none"><svg viewBox="0 0 100 100" preserveAspectRatio="none" width="22" height="22">${noneSwatch}</svg></i></div>
    </div>
    <div class="draw">
      <div class="cur"><svg width="24" height="24" viewBox="0 0 24 24"><circle cx="9" cy="9" r="7.5" fill="#666" stroke="#bbb" stroke-width="2"/><rect x="10" y="10" width="13" height="13" fill="#bbb"/></svg></div>
      <div><svg width="24" height="24" viewBox="0 0 24 24"><path d="M11 12h12v11H11z" fill="#bbb"/><circle cx="9" cy="9" r="7.5" fill="#777" stroke="#bbb" stroke-width="2"/></svg></div>
      <div class="off"><svg width="24" height="24" viewBox="0 0 24 24"><circle cx="10" cy="10" r="8" fill="none" stroke="#333" stroke-width="2"/><rect x="11" y="11" width="8" height="8" fill="#6a6a6a"/></svg></div>
    </div>
    <svg class="screen" viewBox="0 0 44 34"><rect x="1" y="9" width="29" height="24" fill="#555" stroke="#bbb" stroke-width="2"/><rect x="13" y="1" width="30" height="24" fill="url(#dg)" stroke="#ccc" stroke-width="2"/></svg>`;
  }

  renderSwatchCell(s: string) {
    if (s === 'none') {
      return html`<div class="sw sw-none"><svg viewBox="0 0 100 100" preserveAspectRatio="none">${noneSwatch}</svg></div>`;
    }
    if (s === 'reg') {
      return html`<div class="sw sw-reg"><svg viewBox="0 0 26 26"><circle cx="13" cy="13" r="8.5" fill="none" stroke="#111" stroke-width="1.4"/><path d="M13 1v9M13 16v9M1 13h9M16 13h9" stroke="#111" stroke-width="1.4"/><rect x="11" y="11" width="4" height="4" fill="#fff" stroke="#111"/></svg></div>`;
    }
    return html`<div class="sw" style="background:${s}"></div>`;
  }

  renderPanel() {
    return html`<div class="panel">
      <div class="p-tabs">
        <div class="p-tab on p-t1">Swatches</div>
        <div class="p-tab p-t2">Brushes</div>
        <div class="p-tab p-t3">Symbols</div>
        <div class="p-more">
          <svg width="20" height="18" viewBox="0 0 20 18"><path d="M1 2l7 7-7 7zM11 2l7 7-7 7z" fill="#ccc"/></svg>
          <svg width="4" height="24" viewBox="0 0 4 24"><path d="M0 0h3v24H0z" fill="#6c6c6c"/></svg>
          <svg width="30" height="20" viewBox="0 0 30 20"><path d="M0 4h9l-4.500 5z" fill="#ccc"/><path d="M11 1h16v2H11zM11 6h16v2H11zM11 11h16v2H11zM11 16h16v2H11z" fill="#ccc"/></svg>
        </div>
      </div>
      <div class="p-body">
        <div class="p-top">
          <div class="p-wells">
            <div class="p-fill"><svg viewBox="0 0 100 100" preserveAspectRatio="none" width="35" height="35">${noneSwatch}</svg></div>
            <div class="p-stroke"><i></i></div>
          </div>
          <div class="views">
            <div class="v-list"><svg width="24" height="30" viewBox="0 0 24 30"><path d="M0 2h24v4H0zM0 10h24v4H0zM0 18h24v4H0zM0 26h24v4H0z" fill="#c4c4c4"/></svg></div>
            <div class="v-grid"><svg width="28" height="28" viewBox="0 0 28 28"><path d="M0 0h8v8H0zM10 0h8v8h-8zM20 0h8v8h-8zM0 10h8v8H0zM10 10h8v8h-8zM20 10h8v8h-8zM0 20h8v8H0zM10 20h8v8h-8zM20 20h8v8h-8z" fill="#c4c4c4"/></svg></div>
          </div>
        </div>
        <div class="grid-wrap">
          <div class="p-swatches">
            ${swatches.map((row) => html`<div class="sw-row">${row.map((s) => this.renderSwatchCell(s))}</div>`)}
            <div class="sw-row last"><div class="sw sw-a"></div><div class="sw sw-b"></div><div class="sw sw-c"></div></div>
          </div>
          <div class="p-scroll">
            <div class="box"><b class="t-up"></b></div>
            <div class="thumb"></div>
            <div class="t-down"></div>
          </div>
        </div>
        <div class="p-icons">
          ${panelIcons.map((p, i) => html`<svg class="i${i}" viewBox="0 0 44 30">${p}</svg>`)}
        </div>
        <svg class="p-resize" viewBox="0 0 18 18"><path d="M16 1h2v2h-2zM12 5h2v2h-2zM16 5h2v2h-2zM8 9h2v2H8zM12 9h2v2h-2zM16 9h2v2h-2zM4 13h2v2H4zM8 13h2v2H8zM12 13h2v2h-2zM16 13h2v2h-2z" fill="#111"/></svg>
      </div>
      <div class="p-foot"><div class="grip"></div></div>
    </div>`;
  }

  render() {
    return html`<div class="desktop">
      <svg class="wallpaper" viewBox="0 0 2880 1800">
        <defs>
          <filter id="sea" x="0" y="0" width="100%" height="100%" color-interpolation-filters="sRGB">
            <feTurbulence type="fractalNoise" baseFrequency="0.0032 0.03" numOctaves="4" seed="23"/>
            <feColorMatrix type="matrix" values=".36 0 0 0 -.12  .46 0 0 0 -.02  .56 0 0 0 .07  0 0 0 0 1"/>
          </filter>
          <linearGradient id="sea-shade" x1="0" y1="0" x2="0" y2="1"><stop offset="0" stop-color="#00142c" stop-opacity=".55"/><stop offset="1" stop-color="#00142c" stop-opacity="0"/></linearGradient>
        </defs>
        <rect width="2880" height="1800" fill="#123f66" filter="url(#sea)"/>
        <rect y="1660" width="2880" height="80" fill="url(#sea-shade)"/>
      </svg>
      <svg class="defs">
        <defs>
          <linearGradient id="mg" x1="0" y1="0" x2="0" y2="1"><stop offset="0" stop-color="#d8d8d8"/><stop offset="1" stop-color="#858585"/></linearGradient>
          <linearGradient id="dg" x1="0" y1="0" x2="0" y2="1"><stop offset="0" stop-color="#8a8a8a"/><stop offset="1" stop-color="#5a5a5a"/></linearGradient>
          <linearGradient id="hg" x1="0" y1="0" x2="1" y2="0"><stop offset="0" stop-color="#3a3a3a"/><stop offset="1" stop-color="#c4c4c4"/></linearGradient>
          <linearGradient id="ag" x1="0" y1="0" x2="0" y2="1"><stop offset="0" stop-color="#0e0e0e"/><stop offset=".6" stop-color="#1a2a26"/><stop offset="1" stop-color="#2e7462"/></linearGradient>
        </defs>
      </svg>

      <div class="menubar">
        <svg class="apple" viewBox="0 0 30 36"><path d="M21 1c.4 3-2.600 6.500-6 6.300-.4-3 2.800-6.300 6-6.300zM15 10c2 0 3.600-1.400 6.300-1.400 2.300 0 4.600 1.200 6 3.300-5 2.900-4.200 10 1 12-1.500 4.200-5 10-8.200 10-2 0-3-1.300-5.200-1.300s-3.400 1.300-5.200 1.300C5.700 34 1 26 1 19.500 1 13 5 9 9.300 8.800 11.500 8.800 13.400 10 15 10z" fill="url(#ag)"/></svg>
        <div class="menu-app">Illustrator</div>
        ${menuItems.map(([label, w]) => html`<div style="width:${w}px">${label}</div>`)}
        <div class="menu-right">
          ${menuIcons.map(([w, icon]) => html`<div class="mi" style="width:${w}px">${icon}</div>`)}
          <div class="clock">Mon 12:34 PM</div>
          <div class="user">Lara Grant</div>
          ${menuIcons2.map(([w, icon]) => html`<div class="mi" style="width:${w}px">${icon}</div>`)}
        </div>
      </div>

      <div class="appbar">
        <div class="grip-v"></div>
        <div class="ai">Ai</div>
        <div class="br">Br</div>
        <svg class="layout" viewBox="0 0 37 32"><path d="M2 1h15v28H2zM21 1h14v12H21zM21 17h14v12H21z" fill="#b4b4b4"/></svg>
        <div class="arr app-arr"></div>
        <div class="workspace-switch">Essentials<div class="arr"></div></div>
        <div class="search-sep"></div>
        <div class="search"><svg width="22" height="30" viewBox="0 0 22 30"><circle cx="12" cy="10" r="7.500" fill="none" stroke="#222" stroke-width="1.6"/><path d="M8 17L3 29" stroke="#222" stroke-width="1.8"/></svg></div>
      </div>

      <div class="ctrl">
        <div class="grip-v"></div>
        <div class="none-label">No Selection</div>
        <div class="sep"></div>
        <div class="field fill-w"><span class="chip"><svg viewBox="0 0 100 100" preserveAspectRatio="none">${noneSwatch}</svg></span><div class="dd"><div class="arr"></div></div></div>
        <div class="field stroke-w"><span class="chip stroke-chip"><i></i></span><div class="dd"><div class="arr"></div></div></div>
        <div class="orange stroke-l">Stroke:</div>
        <div class="field stroke-f"><div class="spin"><b class="up"></b><b class="down"></b></div><div class="val">1 pt</div><div class="dd"><div class="arr"></div></div></div>
        <div class="field uni"><div class="sel"><i></i>Uniform</div><div class="dd"><div class="arr"></div></div></div>
        <div class="field prof"><div class="sel"><i></i>5 pt. Round</div><div class="dd"><div class="arr"></div></div></div>
        <div class="orange opacity-l">Opacity:</div>
        <div class="field op-f"><div class="val">100%</div><div class="dd"><div class="arr"></div></div></div>
        <div class="style-l">Style:</div>
        <div class="field style-f"><span class="chip"></span><div class="dd"><div class="arr"></div></div></div>
        <div class="sep sep2"></div>
        <div class="btn btn-doc">Document Setup</div>
        <div class="btn btn-pref">Preferences</div>
        <svg class="arrange" viewBox="0 0 30 42"><path d="M2 12h12v22H2zM18 2h12v22H18z" fill="#777" stroke="#aaa"/><path d="M12 6l14 30-8-4-4 8z" fill="#ddd"/></svg>
        <div class="arr arrange-arr"></div>
        <svg class="ctrl-menu" viewBox="0 0 32 24"><path d="M0 10h10l-5 6z" fill="#ccc"/><path d="M13 2h14v2H13zM13 9h14v2H13zM13 16h14v2H13zM13 21h14v2H13z" fill="#ccc"/></svg>
      </div>

      <div class="workspace">
        <div class="leftcol">
          <div class="toolbar">
            <div class="strip">‹‹</div>
            <div class="grip"></div>
            ${this.renderTools()}
            ${this.renderWell()}
          </div>
          <div class="card"><span>+</span></div>
        </div>
        <div class="doc">
          <div class="title">
            <div class="light red"></div><div class="light amber"></div><div class="light green"></div>
            <div class="title-text">font* @ 100% (CMYK/Preview)</div>
          </div>
          <div class="title-gap"></div>
          <div class="tabs">
            ${tabs.map((t) => html`<div class=${t.active ? 'tab on' : 'tab'} style="width:${t.w}px">${t.close ? html`<span class="x">x</span>` : ''}<span>${t.name}</span></div>`)}
            <svg class="tab-more" viewBox="0 0 24 16"><path d="M2 1l8 7-8 7M13 1l8 7-8 7" fill="none" stroke="#ccc" stroke-width="1.6"/></svg>
          </div>
          <div class="doc-mid">
            <div class="rulers">
              <div class="hr-row">
                <svg class="corner" viewBox="0 0 34 33"><path d="M3 10h30M12 10v22" stroke="#9a9a9a" stroke-dasharray="2 2" fill="none"/></svg>
                ${this.renderHRuler()}
              </div>
              <div class="vr-row">
                ${this.renderVRuler()}
                ${this.renderCanvas()}
              </div>
            </div>
            <div class="vscroll"><div class="up"></div><div class="thumb"></div><div class="down"></div></div>
          </div>
          <div class="status">
            <svg class="st-gear" viewBox="0 0 38 24"><circle cx="13" cy="13" r="5" fill="#222" stroke="#222" stroke-dasharray="2 2" stroke-width="4"/><path d="M24 13l6-6v4h5v4h-5v4z" fill="#222"/></svg>
            <svg class="st-share" viewBox="0 0 26 26"><path d="M2 6h13v18H2z" fill="none" stroke="#ddd" stroke-width="2.200"/><path d="M8 18c1-8 5-10 10-10V3l7 8-7 8v-6c-4 0-7 1-10 5z" fill="#ddd"/></svg>
            <div class="st-zoom">100%</div>
            <div class="st-dd"><div class="arr"></div></div>
            <div class="st-nav"><span class="bar-l"><b class="tri-l"></b></span><b class="tri-l"></b></div>
            <div class="st-page">1</div>
            <div class="st-dd"><div class="arr"></div></div>
            <div class="st-nav"><b class="tri-r"></b><span class="bar-r"><b class="tri-r"></b></span></div>
            <div class="st-label">Direct Selection</div>
            <div class="st-next"><b class="tri-r bright"></b></div>
            <div class="hscroll">
              <b class="tri-l bright"></b>
              <div class="thumb"></div>
              <b class="tri-r bright big next"></b>
            </div>
            <div class="resize"><svg width="18" height="18" viewBox="0 0 18 18"><path d="M16 1h2v2h-2zM12 5h2v2h-2zM16 5h2v2h-2zM8 9h2v2H8zM12 9h2v2h-2zM16 9h2v2h-2zM4 13h2v2H4zM8 13h2v2H8zM12 13h2v2h-2zM16 13h2v2h-2z" fill="#aaa"/></svg></div>
          </div>
        </div>
        <div class="rightcol">
          <div class="dock">
            <div class="dock-strip">◂◂</div>
            ${dockGroups.map((g) => html`<div class="dock-group"><div class="grip"></div>
              ${g.map((d) => html`<div class=${d.active ? 'dock-item on' : 'dock-item'}><svg viewBox="0 0 60 44">${d.icon}</svg></div>`)}
            </div>`)}
          </div>
          <div class="pages"><div class="page page-a"></div><div class="page page-b"></div><div class="page page-c"></div></div>
        </div>
      </div>
      ${this.renderPanel()}
    </div>`;
  }
}
